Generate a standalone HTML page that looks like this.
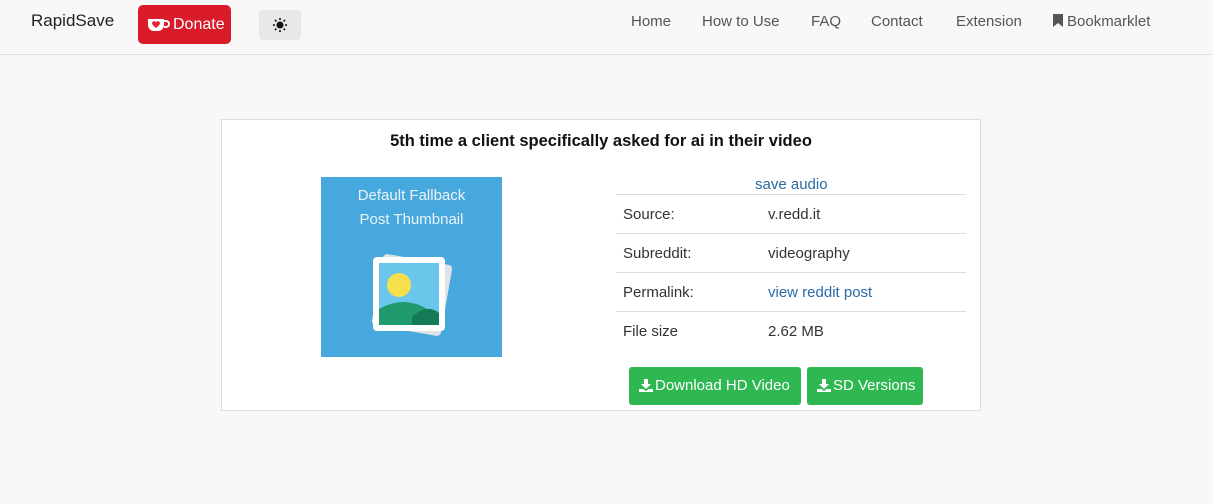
<!DOCTYPE html>
<html><head><meta charset="utf-8"><style>
*{margin:0;padding:0;box-sizing:border-box}
body{width:1213px;height:504px;background:#f8f8f8;font-family:"Liberation Sans",sans-serif;color:#333;position:relative;overflow:hidden}
.nav{position:absolute;left:0;top:0;width:1213px;height:55px;background:#f8f8f8;border-bottom:1px solid #e2e2e2}
.brand{position:absolute;left:31px;top:11px;font-size:17px;color:#222}
.donate{position:absolute;left:138px;top:5px;width:93px;height:39px;background:#d91b2a;border-radius:5px;color:#fff;font-size:16px}
.donate span{position:absolute;left:35px;top:11px}
.theme{position:absolute;left:259px;top:10px;width:42px;height:30px;background:#e8e8e8;border-radius:4px}
.nl{position:absolute;top:12px;font-size:15px;color:#555}
.panel{position:absolute;left:221px;top:119px;width:760px;height:292px;background:#fff;border:1px solid #ddd}
.title{position:absolute;left:0;width:100%;top:12px;text-align:center;font-weight:bold;font-size:16.5px;color:#111}
.thumb{position:absolute;left:99px;top:57px;width:181px;height:180px;background:#47a8dd}
.thumb div{position:absolute;width:100%;text-align:center;color:#eaf4fb;font-size:15px}
.row{position:absolute;left:394px;width:350px;height:39px;border-top:1px solid #ddd;font-size:15px}
.row .l{position:absolute;left:7px;top:11px}
.row .v{position:absolute;left:152px;top:11px}
a{color:#2a6aa5;text-decoration:none}
.btn{position:absolute;top:247px;height:38px;background:#2fb751;border-radius:3px;color:#fff;font-size:15px;line-height:38px;padding-left:26px}
.btn svg{position:absolute;left:10px;top:12px}
</style></head><body>
<div class="nav">
<div class="brand">RapidSave</div>
<div class="donate"><svg style="position:absolute;left:8px;top:12px" width="24" height="16" viewBox="0 0 24 16"><path d="M2 2h16v6a6 6 0 0 1-6 6H8a6 6 0 0 1-6-6z" fill="#fff"/><path d="M18 4h2a3 3 0 0 1 0 6h-2" stroke="#fff" stroke-width="2" fill="none"/><path d="M10 11c-4-3-5-5-3-6.5 1-.7 2.3-.3 3 .7.7-1 2-1.4 3-.7 2 1.5 1 3.5-3 6.5z" fill="#e23"/></svg><span>Donate</span></div>
<div class="theme"><svg style="position:absolute;left:13px;top:7px" width="16" height="16" viewBox="0 0 16 16"><circle cx="8" cy="8" r="3.5" fill="#111"/><g stroke="#111" stroke-width="1.6"><path d="M8 1v2M8 13v2M1 8h2M13 8h2M3 3l1.4 1.4M11.6 11.6L13 13M3 13l1.4-1.4M11.6 4.4L13 3"/></g></svg></div>
<div class="nl" style="left:631px;top:13px">Home</div>
<div class="nl" style="left:702px;top:13px">How to Use</div>
<div class="nl" style="left:811px;top:13px">FAQ</div>
<div class="nl" style="left:871px;top:13px">Contact</div>
<div class="nl" style="left:956px;top:13px">Extension</div>
<div class="nl" style="left:1053px;top:13px"><svg width="10" height="13" viewBox="0 0 10 13" style="vertical-align:-1px;margin-right:4px"><path d="M0 0h10v13l-5-4-5 4z" fill="#555"/></svg>Bookmarklet</div>
</div>
<div class="panel">
<div class="title">5th time a client specifically asked for ai in their video</div>
<div class="thumb">
<div style="top:10px">Default Fallback</div>
<div style="top:34px">Post Thumbnail</div>
<svg style="position:absolute;left:46px;top:72px" width="90" height="92" viewBox="0 0 90 92"><rect x="10" y="10" width="70" height="72" rx="4" fill="#dfe3e6" transform="rotate(10 45 46)"/><rect x="6" y="8" width="72" height="74" rx="4" fill="#fff"/><rect x="12" y="14" width="60" height="62" fill="#6bc6ec"/><circle cx="32" cy="36" r="12" fill="#f5e04c"/><path d="M12 60q25-14 48 0v16H12z" fill="#1f9a6c"/><path d="M45 68q15-14 27-4v12H45z" fill="#147a55"/></svg>
</div>
<div style="position:absolute;left:533px;top:56px;font-size:15px"><a>save audio</a></div>
<div class="row" style="top:74px"><span class="l">Source:</span><span class="v">v.redd.it</span></div>
<div class="row" style="top:113px"><span class="l">Subreddit:</span><span class="v">videography</span></div>
<div class="row" style="top:152px"><span class="l">Permalink:</span><span class="v"><a>view reddit post</a></span></div>
<div class="row" style="top:191px"><span class="l">File size</span><span class="v">2.62 MB</span></div>
<div class="btn" style="left:407px;width:172px"><svg width="14" height="13" viewBox="0 0 14 13"><path d="M5 0h4v5h3l-5 5-5-5h3z" fill="#fff"/><path d="M0 10h4l3 2 3-2h4v3H0z" fill="#fff"/></svg>Download HD Video</div>
<div class="btn" style="left:585px;width:116px"><svg width="14" height="13" viewBox="0 0 14 13"><path d="M5 0h4v5h3l-5 5-5-5h3z" fill="#fff"/><path d="M0 10h4l3 2 3-2h4v3H0z" fill="#fff"/></svg>SD Versions</div>
</div>
</body></html>
